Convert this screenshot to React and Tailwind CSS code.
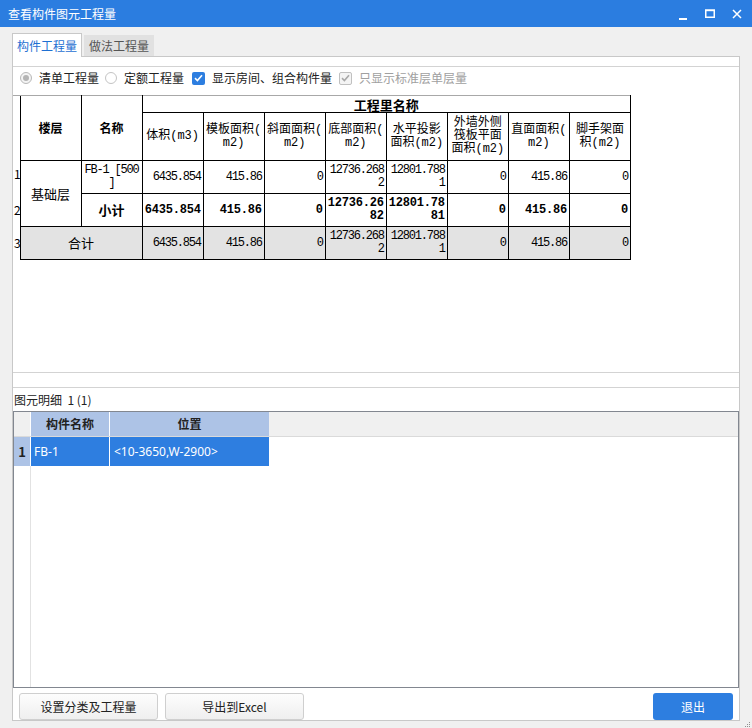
import React from "react";

const MONO = "font-['Liberation_Mono','Noto_Sans_CJK_SC',monospace]";

const headers = [
  ["体积(m3)"],
  ["模板面积(", "m2)"],
  ["斜面面积(", "m2)"],
  ["底部面积(", "m2)"],
  ["水平投影", "面积(m2)"],
  ["外墙外侧", "筏板平面", "面积(m2)"],
  ["直面面积(", "m2)"],
  ["脚手架面", "积(m2)"],
];

const row1 = [["6435.854"], ["415.86"], ["0"], ["12736.268", "2"], ["12801.788", "1"], ["0"], ["415.86"], ["0"]];
const row2 = [["6435.854"], ["415.86"], ["0"], ["12736.26", "82"], ["12801.78", "81"], ["0"], ["415.86"], ["0"]];

function NumCell({ lines, bold, gray }) {
  return (
    <td
      className={`border border-black pr-[2px] pl-[1px] text-right align-middle whitespace-nowrap text-[12px] leading-[13px] ${MONO} ${
        bold ? "font-bold tracking-[-0.2px]" : "tracking-[-1.2px]"
      } ${gray ? "bg-[#e3e3e3]" : ""}`}
    >
      {lines.map((l, i) => (
        <div key={i}>{l}</div>
      ))}
    </td>
  );
}

function Check({ color = "white" }) {
  return (
    <svg width="9" height="8" viewBox="0 0 9 8">
      <path d="M1 4.2 L3.4 6.5 L8 1.2" fill="none" stroke={color} strokeWidth="1.6" />
    </svg>
  );
}

export default function App() {
  return (
    <div className="relative w-[752px] h-[728px] overflow-hidden bg-[#f0f0f0] flex flex-col font-['Noto_Sans_CJK_SC','Microsoft_YaHei',sans-serif] text-[12px] text-[#222]">
      {/* Title bar */}
      <div className="h-[27px] shrink-0 bg-[#2b7de0] flex items-center pl-[8px]">
        <span className="text-white text-[12px] leading-none">查看构件图元工程量</span>
        <div className="ml-auto flex items-center h-full">
          <svg width="10" height="10" viewBox="0 0 10 10" className="mr-[17px] mt-[4px]">
            <rect x="1" y="7" width="8" height="2" fill="white" />
          </svg>
          <svg width="10" height="10" viewBox="0 0 10 10" className="mr-[17px]">
            <rect x="0.75" y="1" width="8.5" height="7.25" fill="none" stroke="white" strokeWidth="1.5" />
            <rect x="0.75" y="1" width="8.5" height="1.2" fill="white" />
          </svg>
          <svg width="10" height="10" viewBox="0 0 10 10" className="mr-[10px]">
            <path d="M1 1 L9 9 M9 1 L1 9" stroke="white" strokeWidth="1.5" />
          </svg>
        </div>
      </div>

      {/* Tabs */}
      <div className="h-[29px] shrink-0 flex items-end pl-[12px]">
        <div className="relative z-10 -mb-[1px] h-[24px] w-[70px] bg-white border border-b-0 border-[#c8c8c8] text-[#1f70d2] flex items-center justify-center leading-none">
          构件工程量
        </div>
        <div className="ml-[2px] h-[21px] w-[70px] bg-[#e1e1e1] text-[#555] flex items-center justify-center leading-none">
          做法工程量
        </div>
      </div>

      {/* Main panel */}
      <div className="ml-[12px] w-[728px] h-[665px] shrink-0 bg-white border border-[#c8c8c8] flex flex-col">
        <div className="h-[9px] shrink-0" />
        {/* top section */}
        <div className="h-[307px] shrink-0 border-t border-b border-[#d3d3d3] flex flex-col">
          {/* options */}
          <div className="h-[22px] flex items-center pl-[7px] leading-none">
            <span className="w-[12px] h-[12px] rounded-full border border-[#b8b8b8] bg-[#f4f4f4] flex items-center justify-center">
              <span className="w-[6px] h-[6px] rounded-full bg-[#b4b4b4]" />
            </span>
            <span className="ml-[7px]">清单工程量</span>
            <span className="ml-[6px] w-[12px] h-[12px] rounded-full border border-[#c4c4c4] bg-white" />
            <span className="ml-[7px]">定额工程量</span>
            <span className="ml-[8px] w-[13px] h-[13px] rounded-[2px] bg-[#2d7ee0] flex items-center justify-center">
              <Check />
            </span>
            <span className="ml-[7px]">显示房间、组合构件量</span>
            <span className="ml-[7px] w-[13px] h-[13px] rounded-[2px] border border-[#c0c0c0] bg-[#f4f4f4] flex items-center justify-center">
              <Check color="#a8a8a8" />
            </span>
            <span className="ml-[7px] text-[#a0a0a0]">只显示标准层单层量</span>
          </div>

          {/* quantity table */}
          <div className="mt-[6px]">
            <table className="table-fixed border-collapse w-[618px] text-black">
              <colgroup>
                <col className="w-[7px]" />
                {Array.from({ length: 10 }).map((_, i) => (
                  <col key={i} className="w-[61px]" />
                ))}
              </colgroup>
              <tbody>
                <tr className="h-[17px]">
                  <td rowSpan={2} className="p-0 border-t border-[#a8a8a8]" />
                  <td rowSpan={2} className="border border-black border-t-[#a8a8a8] text-center align-middle font-bold text-[12px]">
                    楼层
                  </td>
                  <td rowSpan={2} className="border border-black border-t-[#a8a8a8] text-center align-middle font-bold text-[12px]">
                    名称
                  </td>
                  <td colSpan={8} className="border border-black border-t-[#a8a8a8] text-center align-middle font-bold text-[13px] leading-[15px]">
                    工程里名称
                  </td>
                </tr>
                <tr className="h-[48px]">
                  {headers.map((h, i) => (
                    <td key={i} className={`border border-black text-center align-middle whitespace-nowrap text-[12px] leading-[13px] px-0 ${MONO}`}>
                      {h.map((l, j) => (
                        <div key={j}>{l}</div>
                      ))}
                    </td>
                  ))}
                </tr>
                <tr className="h-[33px]">
                  <td className="p-0 align-middle text-[12px] leading-none pb-[6px] pl-[1px] overflow-visible">1</td>
                  <td rowSpan={2} className="border border-black text-center align-middle text-[13px]">
                    基础层
                  </td>
                  <td className={`border border-black text-center align-top pt-[3px] text-[12px] leading-[13px] tracking-[-1.2px] whitespace-nowrap ${MONO}`}>
                    <div>FB-1 [500</div>
                    <div>]</div>
                  </td>
                  {row1.map((c, i) => (
                    <NumCell key={i} lines={c} />
                  ))}
                </tr>
                <tr className="h-[33px]">
                  <td className="p-0 align-middle text-[12px] leading-none pl-[1px]">2</td>
                  <td className="border border-black text-center align-middle font-bold text-[13px]">小计</td>
                  {row2.map((c, i) => (
                    <NumCell key={i} lines={c} bold />
                  ))}
                </tr>
                <tr className="h-[33px]">
                  <td className="p-0 align-middle text-[12px] leading-none pl-[1px]">3</td>
                  <td colSpan={2} className="border border-black bg-[#e3e3e3] text-center align-middle text-[13px]">
                    合计
                  </td>
                  {row1.map((c, i) => (
                    <NumCell key={i} lines={c} gray />
                  ))}
                </tr>
              </tbody>
            </table>
          </div>
        </div>

        <div className="h-[14px] shrink-0" />

        {/* bottom section */}
        <div className="border-t border-[#d3d3d3] flex flex-col flex-1">
          <div className="h-[23px] flex items-center pl-[1px] leading-none">图元明细&nbsp;&nbsp;1 (1)</div>
          <div className="h-[277px] border border-[#828790] flex flex-col">
            <div className="h-[25px] flex bg-[#f0f0f0] border-b border-[#dadada]">
              <div className="w-[17px] border-r border-white" />
              <div className="w-[79px] bg-[#adc3e6] border-r border-white font-bold flex items-center justify-center leading-none">
                构件名称
              </div>
              <div className="w-[159px] bg-[#adc3e6] font-bold flex items-center justify-center leading-none">位置</div>
            </div>
            <div className="h-[29px] flex">
              <div className="w-[17px] bg-[#adc3e6] border-r border-white font-bold flex items-center justify-center leading-none text-[13px]">
                1
              </div>
              <div className="w-[79px] bg-[#2e7ee0] border-r border-white text-white pl-[3px] flex items-center leading-none text-[12px] font-['Segoe_UI','Noto_Sans',sans-serif]">
                FB-1
              </div>
              <div className="w-[159px] bg-[#2e7ee0] text-white pl-[4px] flex items-center leading-none text-[12px] font-['Segoe_UI','Noto_Sans',sans-serif]">
                &lt;10-3650,W-2900&gt;
              </div>
            </div>
            <div className="flex-1 flex">
              <div className="w-[17px] border-r border-[#e2e2e2]" />
            </div>
          </div>

          {/* buttons */}
          <div className="mt-[5px] h-[27px] flex items-stretch pl-[6px] pr-[6px]">
            <button className="w-[139px] rounded-[3px] border border-[#cfcfcf] bg-gradient-to-b from-[#fdfdfd] to-[#efefef] text-[#222] text-[12px] leading-none">
              设置分类及工程量
            </button>
            <button className="ml-[7px] w-[139px] rounded-[3px] border border-[#cfcfcf] bg-gradient-to-b from-[#fdfdfd] to-[#efefef] text-[#222] text-[12px] leading-none">
              导出到Excel
            </button>
            <button className="ml-auto w-[80px] rounded-[3px] bg-[#2d7ee0] text-white text-[12px] leading-none">退出</button>
          </div>
        </div>
      </div>

      {/* resize grip */}
      <div className="absolute right-[2px] bottom-[1px] grid grid-cols-3 gap-[1px]">
        <span className="w-[1px] h-[1px]" />
        <span className="w-[1px] h-[1px]" />
        <span className="w-[1px] h-[1px] bg-[#909090]" />
        <span className="w-[1px] h-[1px]" />
        <span className="w-[1px] h-[1px] bg-[#909090]" />
        <span className="w-[1px] h-[1px] bg-[#909090]" />
        <span className="w-[1px] h-[1px] bg-[#909090]" />
        <span className="w-[1px] h-[1px] bg-[#909090]" />
        <span className="w-[1px] h-[1px] bg-[#909090]" />
      </div>
    </div>
  );
}
